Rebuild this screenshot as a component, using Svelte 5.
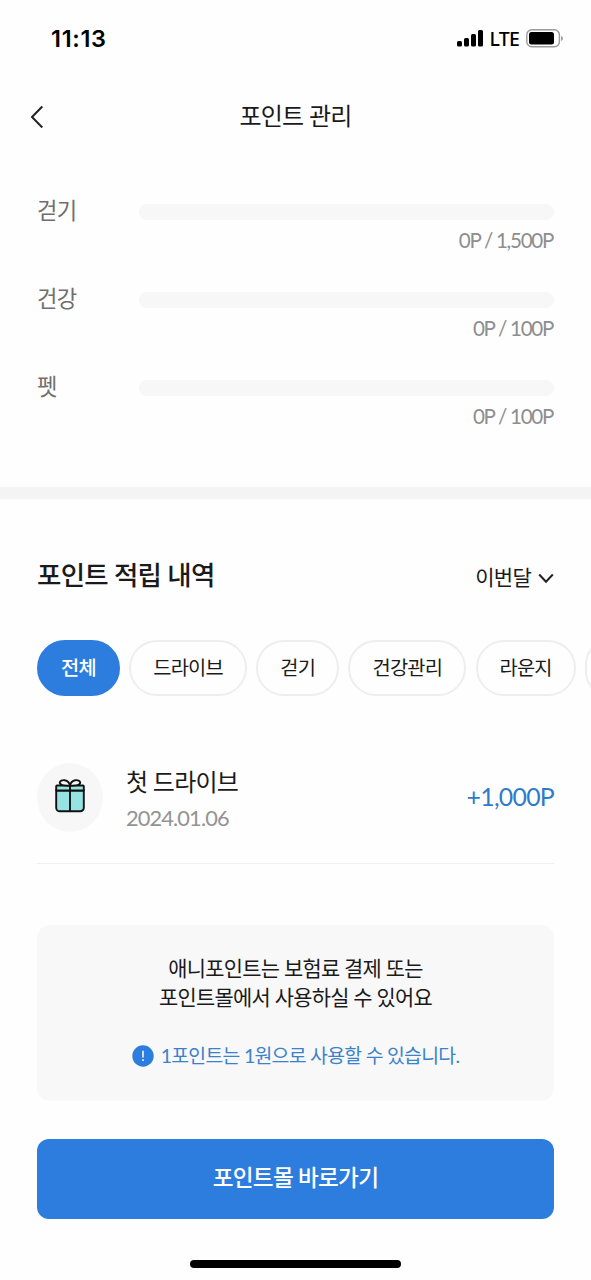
<script lang="ts">
  type Goal = { name: string; point: number; max: number };

  const goals: Goal[] = [
    { name: '걷기', point: 0, max: 1500 },
    { name: '건강', point: 0, max: 100 },
    { name: '펫', point: 0, max: 100 },
  ];

  const filters = ['전체', '드라이브', '걷기', '건강관리', '라운지'];
  let selected = $state('전체');

  const history = [{ title: '첫 드라이브', date: '2024.01.06', point: 1000 }];

  // 1500 -> 1,500P
  function formatPoint(value: number): string {
    return value.toLocaleString('en-US') + 'P';
  }
</script>

<div class="screen">
  <div class="status-bar">
    <span class="clock">11:13</span>
    <div class="status-icons">
      <svg width="27" height="18" viewBox="0 0 27 18">
        <rect x="0" y="12" width="5" height="5.5" rx="1.5" />
        <rect x="7" y="9" width="5" height="8.5" rx="1.5" />
        <rect x="14" y="5" width="5" height="12.5" rx="1.5" />
        <rect x="21" y="1" width="5" height="16.5" rx="1.5" />
      </svg>
      <span class="network">LTE</span>
      <svg width="38" height="19" viewBox="0 0 38 19">
        <rect x="0.8" y="0.8" width="32.6" height="17" rx="5" fill="none" stroke="#9b9b9b" stroke-width="1.4" />
        <rect x="3" y="3" width="25" height="12.6" rx="2.5" />
        <path d="M35.2 7v5c2.2-.8 2.2-4.2 0-5z" fill="#8d8d8d" />
      </svg>
    </div>
  </div>

  <header>
    <button class="back" aria-label="뒤로">
      <svg width="14" height="24" viewBox="0 0 14 24">
        <path d="M12.3 2.5L2 13l10.3 10.5" fill="none" stroke="#222" stroke-width="2" />
      </svg>
    </button>
    <h1>포인트 관리</h1>
  </header>

  <section class="goals">
    {#each goals as goal}
      <div class="goal">
        <span class="goal-name">{goal.name}</span>
        <div class="goal-body">
          <div class="track">
            <div class="fill" style="width: {(goal.point / goal.max) * 100}%"></div>
          </div>
          <span class="goal-point">{formatPoint(goal.point)} / {formatPoint(goal.max)}</span>
        </div>
      </div>
    {/each}
  </section>

  <div class="divider"></div>

  <section class="history">
    <div class="history-head">
      <h2>포인트 적립 내역</h2>
      <button class="period">
        이번달
        <svg width="16" height="12" viewBox="0 0 16 12">
          <path d="M1.2 2.5l6.8 7.2L14.8 2.5" fill="none" stroke="#222" stroke-width="2" />
        </svg>
      </button>
    </div>

    <div class="filters">
      {#each filters as filter}
        <button class="chip" class:active={selected === filter} onclick={() => (selected = filter)}>{filter}</button>
      {/each}
      <span class="chip"></span>
    </div>

    {#each history as item}
      <div class="item">
        <div class="item-icon">
          <svg width="32" height="36" viewBox="0 0 32 36" stroke="#111" stroke-width="1.9">
            <path d="M2.2 11.5h27.6v17.2a3.6 3.6 0 0 1-3.6 3.6H5.8a3.6 3.6 0 0 1-3.6-3.6z" fill="#96e3e3" />
            <rect x="2.2" y="6.5" width="27.6" height="5" rx="0.8" fill="#96e3e3" />
            <path d="M16 6.5v25.8" fill="none" />
            <path d="M16 6.5C12.5 6.7 6.5 6.5 5.8 4 5.6 1.8 8.5.9 10.7 1.2 13.6 1.7 15.5 4 16 6.5zM16 6.5c3.5.2 9.5 0 10.2-2.5C26.4 1.8 23.5.9 21.3 1.2 18.4 1.7 16.5 4 16 6.5z" fill="#f7f7f7" />
          </svg>
        </div>
        <div class="item-text">
          <strong>{item.title}</strong>
          <span>{item.date}</span>
        </div>
        <span class="amount">+{formatPoint(item.point)}</span>
      </div>
    {/each}
  </section>

  <div class="notice">
    <p>애니포인트는 보험료 결제 또는<br />포인트몰에서 사용하실 수 있어요</p>
    <div class="notice-tip">
      <svg width="22" height="22" viewBox="0 0 22 22">
        <circle cx="11" cy="11" r="10.7" fill="#2c7ddd" />
        <path d="M11 5.8v6.7M11 14.3v1.8" stroke="#fff" stroke-width="1.5" />
      </svg>
      <span>1포인트는 1원으로 사용할 수 있습니다.</span>
    </div>
  </div>

  <button class="mall">포인트몰 바로가기</button>

  <div class="home-bar"></div>
</div>

<style>
  :global(body) {
    margin: 0;
    background: #fefefe;
  }

  .screen {
    width: 591px;
    height: 1280px;
    overflow: hidden;
    display: flex;
    flex-direction: column;
    background: #fefefe;
    color: #1a1a1a;
    font-family: Lato, 'Noto Sans CJK KR', sans-serif;
    letter-spacing: -0.045em;
  }

  button {
    margin: 0;
    padding: 0;
    border: none;
    background: none;
    color: inherit;
    font: inherit;
    letter-spacing: inherit;
    cursor: pointer;
  }

  svg {
    display: block;
    flex: none;
  }

  .status-bar {
    display: flex;
    justify-content: space-between;
    align-items: center;
    height: 76px;
    padding: 0 27px 0 51px;
    box-sizing: border-box;
    color: #000;
    font-family: Inter, sans-serif;
  }

  .clock {
    font-size: 23.5px;
    font-weight: 600;
    letter-spacing: 0.7px;
  }

  .status-icons {
    display: flex;
    align-items: center;
  }

  .network {
    margin: 0 7px 0 6px;
    font-family: 'Noto Sans', sans-serif;
    font-size: 19.5px;
    font-weight: 500;
    letter-spacing: -0.8px;
  }

  header {
    display: flex;
    align-items: center;
    height: 80px;
    padding: 0 30px;
  }

  .back {
    width: 14px;
  }

  h1 {
    flex: 1;
    margin: 0 14px 0 0;
    text-align: center;
    font-size: 24px;
    font-weight: 400;
    line-height: 36px;
  }

  .goals {
    display: flex;
    flex-direction: column;
    height: 331px;
    padding: 38px 37px 0;
    box-sizing: border-box;
  }

  .goal {
    display: flex;
    height: 88px;
  }

  .goal-name {
    width: 102px;
    color: #6f6f6f;
    font-size: 22.2px;
    line-height: 34px;
  }

  .goal-body {
    flex: 1;
    padding-top: 10px;
  }

  .track {
    height: 16px;
    border-radius: 8px;
    background: #f7f7f7;
    overflow: hidden;
  }

  .fill {
    height: 100%;
    background: #2c7ddd;
  }

  .goal-point {
    display: block;
    margin: 5px 1px 0 0;
    text-align: right;
    color: #8e8e8e;
    font-size: 20.6px;
    line-height: 30px;
    letter-spacing: -0.063em;
  }

  .divider {
    flex: none;
    height: 12px;
    background: #f4f4f4;
  }

  .history {
    padding: 56px 37px 0;
  }

  .history-head {
    display: flex;
    justify-content: space-between;
    align-items: center;
    height: 40px;
  }

  h2 {
    margin: 0;
    font-size: 26.5px;
    font-weight: 500;
    line-height: 40px;
  }

  .period {
    display: flex;
    align-items: center;
    gap: 7px;
    padding-top: 3px;
    font-size: 21px;
    line-height: 30px;
  }

  .period svg {
    margin-top: 2px;
  }

  .filters {
    display: flex;
    gap: 9.4px;
    margin: 45px -37px 0 0;
    overflow: hidden;
  }

  .chip {
    flex: none;
    height: 56px;
    padding: 0 22px 1px;
    border: 2px solid #eee;
    border-radius: 28px;
    box-sizing: border-box;
    font-size: 19.8px;
    line-height: 49px;
    letter-spacing: -0.04em;
  }

  .chip.active {
    border-color: #2c7ddd;
    background: #2c7ddd;
    color: #fff;
    font-weight: 500;
  }

  .item {
    display: flex;
    align-items: center;
    height: 168px;
    padding-top: 35px;
    box-sizing: border-box;
    border-bottom: 1px solid #efefef;
  }

  .item-icon {
    display: flex;
    justify-content: center;
    align-items: center;
    width: 66px;
    height: 69px;
    border-radius: 50%;
    background: #f7f7f7;
  }

  .item-text {
    flex: 1;
    display: flex;
    flex-direction: column;
    margin: 3px 0 0 23px;
  }

  .item-text strong {
    font-size: 24px;
    font-weight: 400;
    line-height: 38px;
  }

  .item-text span {
    color: #939393;
    font-size: 21.8px;
    line-height: 34px;
    letter-spacing: -0.04em;
  }

  .amount {
    margin-top: -2px;
    color: #2f7bc8;
    font-size: 24.8px;
    font-weight: 400;
  }

  .notice {
    display: flex;
    flex-direction: column;
    align-items: center;
    flex: none;
    height: 176px;
    margin: 61px 37px 0;
    padding-top: 28px;
    box-sizing: border-box;
    border-radius: 13px;
    background: #f8f8f8;
  }

  .notice p {
    margin: 0;
    text-align: center;
    font-size: 20.9px;
    line-height: 29px;
  }

  .notice-tip {
    display: flex;
    align-items: center;
    gap: 7px;
    margin-top: 30px;
    color: #3b82cb;
    font-size: 19.4px;
    line-height: 30px;
  }

  .mall {
    flex: none;
    height: 80px;
    margin: 38px 37px 0;
    padding-bottom: 5px;
    border-radius: 12px;
    background: #2c7ddd;
    color: #fff;
    font-size: 22.6px;
    font-weight: 500;
  }

  .home-bar {
    flex: none;
    width: 211px;
    height: 8px;
    margin: 41px auto 0;
    border-radius: 4px;
    background: #000;
  }
</style>
